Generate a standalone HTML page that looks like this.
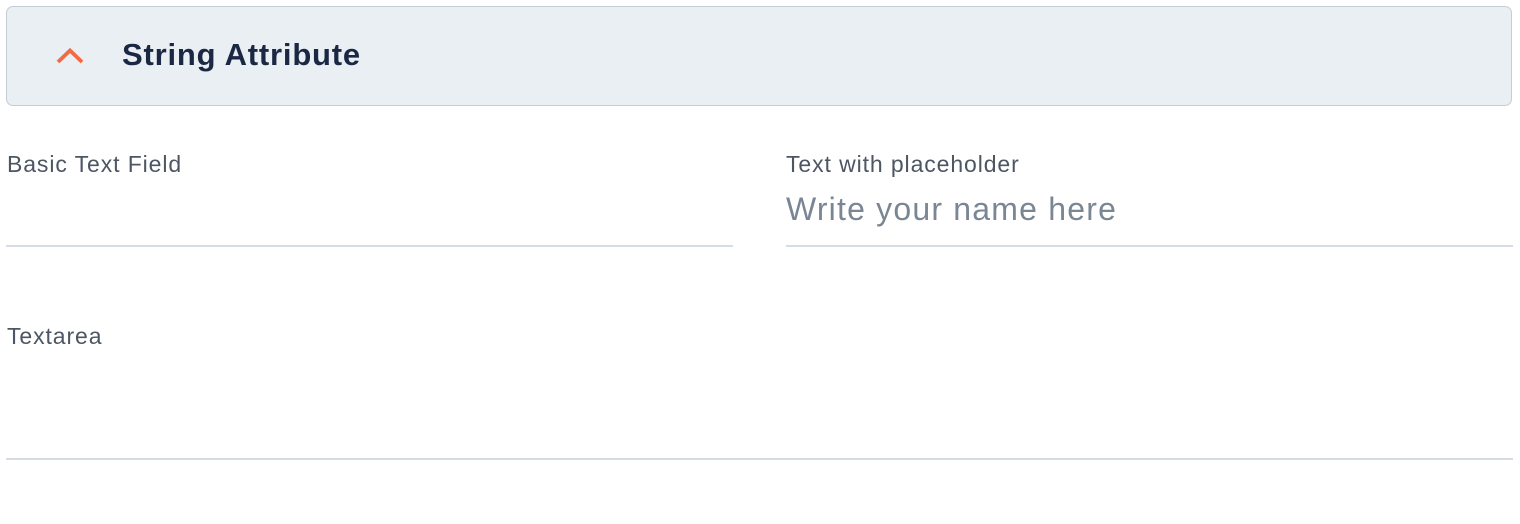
<!DOCTYPE html>
<html><head><style>
body{margin:0;width:1520px;height:524px;background:#fff;font-family:"Liberation Sans",sans-serif;position:relative;overflow:hidden}
.hdr{position:absolute;left:6px;top:6px;width:1504px;height:98px;background:#eaeff4;border:1.5px solid #c3ccd8;border-radius:7px}
.t{position:absolute;left:122px;top:37px;font-size:31px;font-weight:bold;color:#1b2843;line-height:36px;letter-spacing:0.8px}
.l{position:absolute;font-size:23px;color:#4d5663;line-height:26px;letter-spacing:0.9px}
.ph{position:absolute;font-size:32px;color:#7a8694;line-height:36px;letter-spacing:1.2px}
.ln{position:absolute;height:2px;background:#d5dce4}
</style></head><body>
<div class="hdr"></div>
<svg style="position:absolute;left:55px;top:44px" width="32" height="24"><path d="M3 18 L15 6.5 L27 18" fill="none" stroke="#f26b44" stroke-width="3.8"/></svg>
<div class="t">String Attribute</div>
<div class="l" style="left:7px;top:151px">Basic Text Field</div>
<div class="l" style="left:786px;top:151px">Text with placeholder</div>
<div class="ph" style="left:786px;top:191px">Write your name here</div>
<div class="ln" style="left:6px;top:245px;width:727px"></div>
<div class="ln" style="left:786px;top:245px;width:727px"></div>
<div class="l" style="left:7px;top:323px">Textarea</div>
<div class="ln" style="left:6px;top:458px;width:1507px"></div>
</body></html>
